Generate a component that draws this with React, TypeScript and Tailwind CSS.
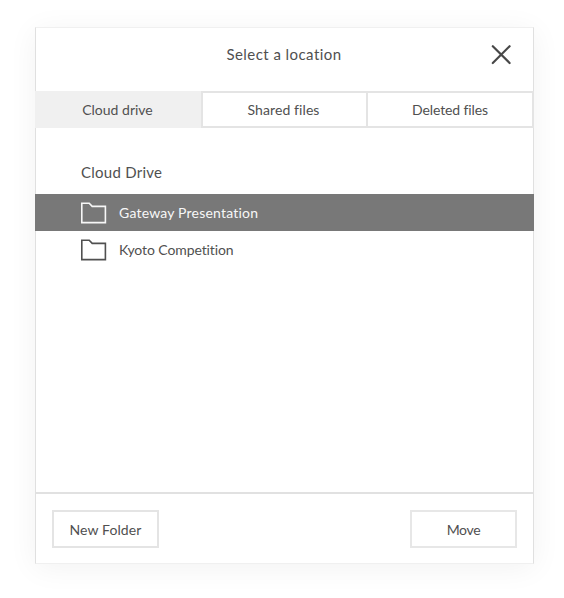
type FolderProps = { name: string; selected?: boolean; spacing: string };

const FolderIcon = () => (
  <svg width="26" height="22" viewBox="0 0 26 22" fill="none" stroke="currentColor" strokeWidth="1.6">
    <path d="M.8 20.6V1.2H8.2L11.2 4.4H24.4V20.6Z" />
  </svg>
);

const FolderRow = ({ name, selected, spacing }: FolderProps) => (
  <li
    className={`-mx-px flex h-[37px] items-center pl-[46px] ${
      selected ? "bg-[#787878] text-[#f7f7f7]" : "text-[#505050]"
    }`}
  >
    <FolderIcon />
    <span className={`ml-3 text-[14px] leading-5 ${spacing}`}>{name}</span>
  </li>
);

export default function App() {
  return (
    <main className="h-[598px] w-[564px] overflow-hidden bg-white pt-[27px] pl-[35px] font-['Lato',sans-serif] text-[#505050]">
      <section className="flex h-[537px] w-[499px] flex-col border border-x-[#e0e0e0] border-y-[#f0f0f0] bg-white shadow-[0_4px_28px_rgba(0,0,0,0.055)]">
        <header className="grid h-[63px] shrink-0 grid-cols-[1fr_auto_1fr] items-center pb-[9px]">
          <span />
          <h1 className="-mt-[3px] -ml-px text-[15px] leading-5 tracking-[0.44px]">Select a location</h1>
          <button aria-label="Close" className="mr-[21px] justify-self-end">
            <svg width="22" height="22" viewBox="0 0 22 22" stroke="#484848" strokeWidth="2.2" strokeLinecap="round">
              <path d="M2.8 2.2L19.6 19M19.6 2.2L2.8 19" />
            </svg>
          </button>
        </header>
        <nav className="-mx-px flex h-[37px] shrink-0 text-[14px] leading-5">
          <button className="w-[166px] bg-[#f0f0f0] pr-px tracking-[0px]">Cloud drive</button>
          <button className="w-[165px] border-2 border-r-0 border-[#e4e4e4] pr-0.5 tracking-[0.1px]">Shared files</button>
          <button className="w-[168px] border-2 border-[#e4e4e4] tracking-[-0.1px]">Deleted files</button>
        </nav>
        <div className="flex-1">
          <h2 className="mt-[34px] ml-[45px] text-[15px] leading-5 tracking-[0.26px]">Cloud Drive</h2>
          <ul className="mt-3">
            <FolderRow name="Gateway Presentation" selected spacing="tracking-[0.2px]" />
            <FolderRow name="Kyoto Competition" spacing="tracking-[-0.1px]" />
          </ul>
        </div>
        <footer className="flex h-[71px] shrink-0 items-center justify-between border-t-2 border-[#e1e1e1] px-4 pt-px text-[14px]">
          <button className="h-[38px] w-[107px] border-2 border-[#e4e4e4] tracking-[0.1px]">New Folder</button>
          <button className="h-[38px] w-[107px] border-2 border-[#e7e7e7] tracking-[-0.3px]">Move</button>
        </footer>
      </section>
    </main>
  );
}
